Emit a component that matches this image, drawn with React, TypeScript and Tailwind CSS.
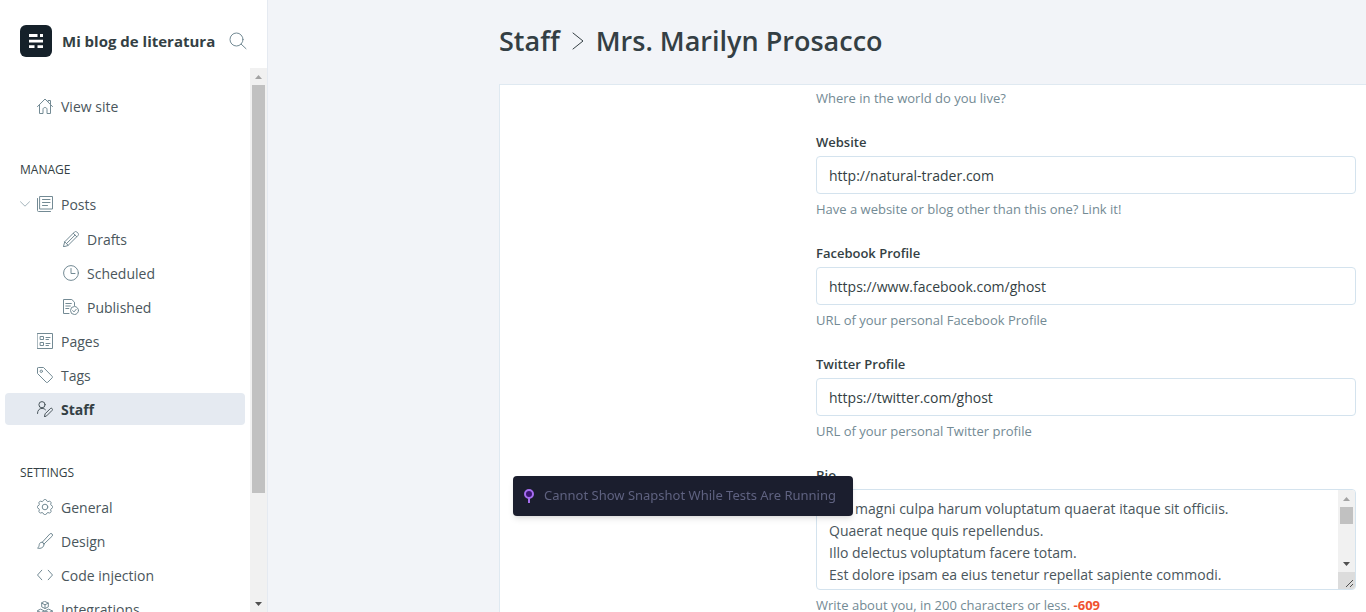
import type { ReactNode } from "react";

const stroke = {
  fill: "none",
  stroke: "currentColor",
  strokeLinecap: "round",
  strokeLinejoin: "round",
} as const;

function Icon({ children }: { children: ReactNode }) {
  return (
    <svg viewBox="0 0 16 16" className="size-4 shrink-0" aria-hidden="true" {...stroke} strokeWidth="1">
      {children}
    </svg>
  );
}

const icons = {
  home: (
    <Icon>
      <path d="M.5 8.600 8 1l7.500 7.600M2.500 7v8.500h3.500v-4.200c0-1 .8-1.800 2-1.800s2 .8 2 1.800v4.200h3.500V7M11 3.500V2.500h2.500v3.500" />
    </Icon>
  ),
  posts: (
    <Icon>
      <path d="M3 .5h12.500v12.500H3zM.5 2.500v12a1 1 0 0 0 1 1h12M5.500 3.500h7.500M5.500 6.500h7.500M5.500 9.500h5" />
    </Icon>
  ),
  pencil: (
    <Icon>
      <path d="m.5 15.500 1.200-4.700L11.600.9a1.500 1.500 0 0 1 2.100 0l1.400 1.400a1.500 1.500 0 0 1 0 2.100L5.200 14.300zM1.700 10.800l3.500 3.500M10.300 2.300l3.500 3.500M3.600 12.500l8.300-8.300" />
    </Icon>
  ),
  clock: (
    <Icon>
      <circle cx="8" cy="8" r="7.400" />
      <path d="M8 3.500V8.500h4" />
    </Icon>
  ),
  published: (
    <Icon>
      <path d="M6 14.500H.5V.5h8.300l2.700 2.700v3.300M2.800 4.500h5.500M2.800 7h4.500M2.800 9.500h3" />
      <circle cx="11.500" cy="11.500" r="4" />
      <path d="m9.700 11.600 1.300 1.300 2.200-2.600" />
    </Icon>
  ),
  pages: (
    <Icon>
      <path d="M.5.5h15v15H.5zM3.500 3.500h3v3h-3zM3.500 9.500h3v3h-3zM9 4.500h4M9 6.500h2.500M9 10.500h4M9 12.500h2.500" />
    </Icon>
  ),
  tag: (
    <Icon>
      <path d="M.5 1.300v5.200L9.300 15.300a1 1 0 0 0 1.400 0l4.500-4.500a1 1 0 0 0 0-1.400L6.500.5H1.300a.8.8 0 0 0-.8.8z" />
      <circle cx="4.300" cy="4.300" r="1.200" />
    </Icon>
  ),
  staff: (
    <Icon>
      <circle cx="5" cy="3.700" r="3.100" />
      <path d="M.5 12.500C.5 9.300 2.300 7.400 5 7.400c1.500 0 2.700.5 3.500 1.400M7.500 15.500l.6-2.700 5.200-5.200a1.250 1.250 0 0 1 1.800 0 1.250 1.250 0 0 1 0 1.800l-5.200 5.200z" />
    </Icon>
  ),
  gear: (
    <Icon>
      <path d="M6.700.9c.4-.6 2.200-.6 2.600 0l.7 1.300c.2.400.6.500 1 .4l1.400-.4c.7-.2 1.900 1 1.700 1.700l-.4 1.300c-.1.400.1.800.4 1l1.100.6c.6.300.6 2.100 0 2.400l-1.200.7c-.3.200-.5.600-.3 1l.4 1.400c.2.700-1 1.900-1.700 1.700l-1.400-.4c-.4-.1-.8.100-1 .4l-.7 1.200c-.4.600-2.200.6-2.600 0L6 14c-.2-.3-.6-.5-1-.4l-1.400.4c-.7.2-1.900-1-1.700-1.700l.4-1.400c.2-.4 0-.8-.3-1L.8 9.200c-.6-.3-.6-2.100 0-2.400L2 6.200c.3-.2.5-.6.300-1L1.900 3.900C1.700 3.200 2.900 2 3.600 2.200L5 2.600c.4.100.8 0 1-.4z" />
      <circle cx="8" cy="8" r="2.800" />
    </Icon>
  ),
  brush: (
    <Icon>
      <path d="M5.200 9.300 12.800 1a1.550 1.550 0 0 1 2.300 2.200L7 11M5.200 9.300c-1.700-.2-2.900.9-3 2.400-.1 1.600-.6 2.600-1.700 3.500 3.400.7 6.700-.7 6.500-4.200zM5.200 9.300 7 11" />
    </Icon>
  ),
  code: (
    <Icon>
      <path d="M4.800 3.200.5 8l4.300 4.800M11.200 3.200 15.500 8l-4.300 4.800" />
    </Icon>
  ),
  integrations: (
    <Icon>
      <path d="m8 .5 3.300 1.600v3.800L8 7.500 4.700 5.900V2.100zM4.700 2.100 8 3.800l3.300-1.700M8 3.800v3.700M4 8.300l3.300 1.600v3.800L4 15.300.7 13.700V9.900zM.7 9.900 4 11.600l3.300-1.700M4 11.600v3.700M12 8.300l3.300 1.600v3.800L12 15.300l-3.300-1.600V9.900zM8.700 9.900l3.300 1.700 3.300-1.700M12 11.600v3.700" />
    </Icon>
  ),
};

type NavItemProps = { icon: ReactNode; label: string; active?: boolean; nested?: boolean; expandable?: boolean };

function NavItem({ icon, label, active, nested, expandable }: NavItemProps) {
  return (
    <li className={`flex h-8 items-center rounded ${active ? "bg-[#e5eaf1]" : ""} ${nested ? "pl-[58px]" : "pl-[15px]"}`}>
      {!nested && (
        <span className="flex w-[17px] shrink-0 text-[#a4b4bb]">
          {expandable && (
            <button type="button" aria-label="Toggle posts" className="flex">
              <svg viewBox="0 0 10 6" className="h-[6px] w-[10px]" aria-hidden="true" {...stroke}>
                <path d="m.5.8 4.500 4.400L9.500.8" strokeWidth="1" />
              </svg>
            </button>
          )}
        </span>
      )}
      <a
        href="#"
        className={`flex items-center gap-2 ${active ? "font-bold text-[#343f44]" : "text-[#4a565c]"}`}
      >
        <span className={active ? "text-[#4a565c]" : "text-[#738a94]"}>{icon}</span>
        {label}
      </a>
    </li>
  );
}

function Arrow({ down, className }: { down?: boolean; className: string }) {
  return (
    <svg viewBox="0 0 17 17" className={`size-[17px] shrink-0 ${className}`} aria-hidden="true">
      <path d={down ? "M5 7h7l-3.500 4z" : "M5 11h7l-3.500-4z"} fill="currentColor" />
    </svg>
  );
}

function Field({ id, label, value, help }: { id: string; label: string; value: string; help: string }) {
  return (
    <div className="mb-6">
      <label htmlFor={id} className="mb-1 block text-[13px] leading-5 font-semibold text-[#343f44]">
        {label}
      </label>
      <input
        id={id}
        defaultValue={value}
        className="block h-[38px] w-full rounded border border-[#d4e3ee] bg-white px-3 text-[14px] text-[#343f44] outline-none"
      />
      <p className="mt-[5px] text-[13px] leading-5 text-[#738a94]">{help}</p>
    </div>
  );
}

const bio = [
  "Aut magni culpa harum voluptatum quaerat itaque sit officiis.",
  "Quaerat neque quis repellendus.",
  "Illo delectus voluptatum facere totam.",
  "Est dolore ipsam ea eius tenetur repellat sapiente commodi.",
].join("\n");

export default function App() {
  return (
    <div className="flex h-screen overflow-hidden bg-[#f2f4f8] font-['Open_Sans','Noto_Sans',sans-serif] text-[14px]">
      <aside className="flex w-[268px] shrink-0 flex-col border-r border-[#e5eaf1] bg-white">
        <header className="flex h-[68px] shrink-0 items-center pt-[14px] pr-5 pl-5">
          <svg viewBox="0 0 32 32" className="size-8 shrink-0" aria-hidden="true">
            <rect width="32" height="32" rx="6" fill="#15212a" />
            <path d="M9 9h8.500v3H9zM20 9h3v3h-3zM9 14.800h14v2.600H9zM9 20.300h5.500v2.800H9zM17.500 20.300H23v2.800h-5.500z" fill="#fff" />
          </svg>
          <span className="ml-[10px] flex-1 text-[15px] leading-5 font-bold whitespace-nowrap text-[#343f44]">Mi blog de literatura</span>
          <button type="button" aria-label="Search" className="text-[#738a94]">
            <svg viewBox="0 0 18 18" className="size-[18px]" aria-hidden="true" {...stroke}>
              <circle cx="7.500" cy="7.500" r="6.500" strokeWidth="1" />
              <path d="m12.200 12.200 4.800 4.500" strokeWidth="1" />
            </svg>
          </button>
        </header>

        <div className="flex min-h-0 flex-1">
          <nav className="flex-1 overflow-hidden px-[5px] pt-[22px]">
            <ul>
              <NavItem icon={icons.home} label="View site" />
            </ul>
            <h2 className="mt-[38px] mb-2 pl-[15px] text-[12px] leading-5 text-[#343f44]">MANAGE</h2>
            <ul className="flex flex-col gap-[2px]">
              <NavItem icon={icons.posts} label="Posts" expandable />
              <li className="mt-px">
                <ul className="flex flex-col gap-[2px]">
                  <NavItem icon={icons.pencil} label="Drafts" nested />
                  <NavItem icon={icons.clock} label="Scheduled" nested />
                  <NavItem icon={icons.published} label="Published" nested />
                </ul>
              </li>
              <NavItem icon={icons.pages} label="Pages" />
              <NavItem icon={icons.tag} label="Tags" />
              <NavItem icon={icons.staff} label="Staff" active />
            </ul>
            <h2 className="mt-[38px] mb-2 pl-[15px] text-[12px] leading-5 text-[#343f44]">SETTINGS</h2>
            <ul className="flex flex-col gap-[2px]">
              <NavItem icon={icons.gear} label="General" />
              <NavItem icon={icons.brush} label="Design" />
              <NavItem icon={icons.code} label="Code injection" />
              <NavItem icon={icons.integrations} label="Integrations" />
            </ul>
          </nav>
          <div className="flex w-[17px] shrink-0 flex-col bg-[#f1f1f1]">
            <Arrow className="text-[#a3a3a3]" />
            <div className="min-h-0 flex-1">
              <div className="mx-[2px] h-4/5 bg-[#c1c1c1]" />
            </div>
            <Arrow down className="text-[#505050]" />
          </div>
        </div>
      </aside>

      <main className="flex min-w-0 flex-1 flex-col pl-[231px]">
        <h1 className="flex h-[84px] shrink-0 items-center pb-[2px] text-[27px] leading-9 font-semibold text-[#343f44]">
          <a href="#">Staff</a>
          <svg viewBox="0 0 12 18" className="mx-3 h-[18px] w-3" aria-hidden="true" {...stroke}>
            <path d="m1 1 10 8-10 8" strokeWidth="1" />
          </svg>
          Mrs. Marilyn Prosacco
        </h1>
        <section className="flex min-h-0 flex-1 overflow-hidden border-t border-l border-[#dfe9f1] bg-white pt-[3px]">
          <form className="ml-[316px] min-w-0 flex-1 pr-[10px]">
            <p className="mb-6 text-[13px] leading-5 text-[#738a94]">Where in the world do you live?</p>
            <Field id="website" label="Website" value="http://natural-trader.com" help="Have a website or blog other than this one? Link it!" />
            <Field id="facebook" label="Facebook Profile" value="https://www.facebook.com/ghost" help="URL of your personal Facebook Profile" />
            <Field id="twitter" label="Twitter Profile" value="https://twitter.com/ghost" help="URL of your personal Twitter profile" />
            <label htmlFor="bio" className="mb-1 block text-[13px] leading-5 font-semibold text-[#343f44]">
              Bio
            </label>
            <div className="flex h-[101px] overflow-hidden rounded border border-[#d4e3ee]">
              <textarea
                id="bio"
                defaultValue={bio}
                className="block min-w-0 flex-1 resize-none overflow-hidden px-3 pt-2 text-[14px] leading-[22px] text-[#4a565c] outline-none"
              />
              <div className="flex w-[17px] shrink-0 flex-col bg-[#f1f1f1]">
                <Arrow className="text-[#a3a3a3]" />
                <div className="flex-1">
                  <div className="mx-[2px] h-[17px] bg-[#c1c1c1]" />
                </div>
                <Arrow down className="text-[#505050]" />
                <svg viewBox="0 0 17 17" className="size-[17px] bg-[#dcdcdc]" aria-hidden="true">
                  <path d="m8 15 7-7M12 15l3-3" stroke="#505050" strokeWidth="1" />
                </svg>
              </div>
            </div>
            <p className="mt-[5px] text-[13px] leading-5 text-[#738a94]">
              Write about you, in 200 characters or less. <b className="text-[#f05230]">-609</b>
            </p>
          </form>
        </section>
      </main>

      <div
        role="status"
        className="fixed bottom-24 left-[513px] flex h-10 w-[340px] items-center gap-[10px] rounded bg-[#1b1e2e] pl-[11px] font-['Noto_Sans','Open_Sans',sans-serif] text-[13px] whitespace-nowrap text-[#5f6280] shadow-md"
      >
        <svg viewBox="0 0 10 14" className="h-[14px] w-[10px] shrink-0" aria-hidden="true">
          <circle cx="5" cy="5" r="4" fill="#3b1573" stroke="#a66df0" strokeWidth="2" />
          <path d="M5 9v5" stroke="#a66df0" strokeWidth="2" />
        </svg>
        Cannot Show Snapshot While Tests Are Running
      </div>
    </div>
  );
}
